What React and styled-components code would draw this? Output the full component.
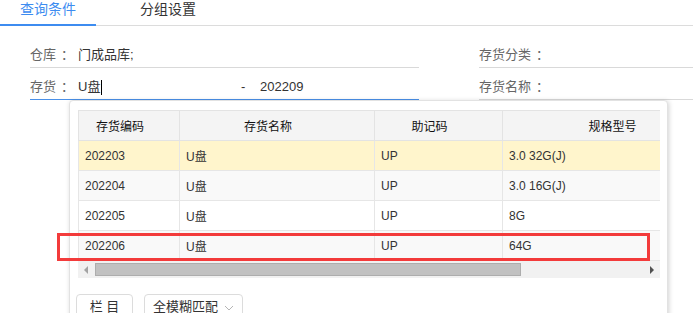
import React from 'react';
import styled, { createGlobalStyle } from 'styled-components';

const GlobalStyle = createGlobalStyle`
  html, body {
    margin: 0;
    padding: 0;
    background: #fff;
    overflow: hidden;
  }
  body {
    font-family: "Liberation Sans", "Noto Sans CJK SC", sans-serif;
    color: #333;
  }
`;

const Page = styled.div`
  position: relative;
  width: 693px;
  height: 313px;
  overflow: hidden;
`;

const TabBar = styled.div`
  display: flex;
  height: 25px;
  border-bottom: 1px solid #dcdcdc;
`;

const Tab = styled.div`
  box-sizing: border-box;
  width: 96px;
  height: 26px;
  margin-right: 24px;
  text-align: center;
  font-size: 14px;
  line-height: 19px;
  color: ${(p) => (p.$active ? '#3d8cf0' : '#333')};
  border-bottom: 2px solid ${(p) => (p.$active ? '#3d8cf0' : 'transparent')};
`;

const Form = styled.div`
  display: grid;
  grid-template-columns: 389px 1fr;
  column-gap: 60px;
  row-gap: 7px;
  padding: 17px 0 0 30px;
`;

const Field = styled.div`
  display: flex;
  align-items: center;
  height: 24px;
  font-size: 13px;
  line-height: 24px;
  border-bottom: 1px solid ${(p) => (p.$focused ? '#4a90e8' : '#d9d9d9')};
`;

const Label = styled.span`
  width: ${(p) => (p.$auto ? 'auto' : '48px')};
  flex: none;
  color: #666;
  white-space: nowrap;
`;

const Colon = styled.span`
  margin-left: 5px;
`;

const Value = styled.span`
  color: #333;
  white-space: nowrap;
  width: ${(p) => p.$width || 'auto'};
  display: inline-flex;
  align-items: center;
`;

const Caret = styled.span`
  display: inline-block;
  width: 1px;
  height: 15px;
  background: #000;
  margin-left: 1px;
`;

const Dash = styled.span`
  width: 19px;
  color: #333;
`;

const Panel = styled.div`
  position: absolute;
  left: 69px;
  top: 100px;
  box-sizing: border-box;
  width: 599px;
  height: 240px;
  padding: 9px 0 0 8px;
  background: #fff;
  border: 1px solid #e2e2e2;
  border-radius: 4px;
  box-shadow: 1px 1px 5px rgba(0, 0, 0, 0.18);
`;

const GridWrap = styled.div`
  width: 582px;
  overflow: hidden;
`;

const Table = styled.table`
  table-layout: fixed;
  border-collapse: collapse;
  width: 662px;
  font-size: 12px;
`;

const Th = styled.th`
  height: 29px;
  padding: 0 18px 0 0;
  background: #f4f4f4;
  border: 1px solid #e3e3e3;
  font-weight: normal;
  color: #111;
  text-align: center;
  white-space: nowrap;
`;

const Row = styled.tr`
  background: ${(p) => p.$bg};
`;

const Td = styled.td`
  height: 29px;
  padding: 0 6px;
  border: 1px solid #e6e6e6;
  color: #333;
  white-space: nowrap;
`;

const ScrollBar = styled.div`
  display: flex;
  align-items: center;
  height: 17px;
  background: #f1f1f1;
`;

const Arrow = styled.div`
  width: 17px;
  height: 17px;
  display: flex;
  align-items: center;
  justify-content: center;
  flex: none;
`;

const Thumb = styled.div`
  box-sizing: border-box;
  width: 426px;
  height: 13px;
  background: #c1c1c1;
  border: 1px solid #adadad;
`;

const Track = styled.div`
  flex: 1;
`;

const Footer = styled.div`
  display: flex;
  gap: 11px;
  margin: 16px 0 0 -2px;
`;

const Button = styled.div`
  box-sizing: border-box;
  display: flex;
  align-items: flex-start;
  justify-content: ${(p) => (p.$between ? 'space-between' : 'center')};
  width: ${(p) => p.$width};
  height: 28px;
  padding: 3px 8px 0;
  border: 1px solid #dcdcdc;
  border-radius: 4px;
  font-size: 13px;
  line-height: 18px;
  color: #333;
  white-space: nowrap;
`;

const Chevron = styled.svg`
  margin-top: 7px;
`;

const Highlight = styled.div`
  position: absolute;
  left: 57px;
  top: 233px;
  width: 593px;
  height: 28px;
  box-sizing: border-box;
  border: 3px solid #f33b3b;
  pointer-events: none;
`;

const columns = [
  { title: '存货编码', width: 101 },
  { title: '存货名称', width: 195 },
  { title: '助记码', width: 128 },
  { title: '规格型号', width: 238 },
];

const rows = [
  { code: '202203', name: 'U盘', mnem: 'UP', spec: '3.0 32G(J)', bg: '#fff5cc' },
  { code: '202204', name: 'U盘', mnem: 'UP', spec: '3.0 16G(J)', bg: '#f9f9f9' },
  { code: '202205', name: 'U盘', mnem: 'UP', spec: '8G', bg: '#ffffff' },
  { code: '202206', name: 'U盘', mnem: 'UP', spec: '64G', bg: '#f9f9f9' },
];

const App = () => {
  return (
    <Page>
      <GlobalStyle />
      <TabBar>
        <Tab $active>查询条件</Tab>
        <Tab>分组设置</Tab>
      </TabBar>

      <Form>
        <Field>
          <Label>仓库<Colon>：</Colon></Label>
          <Value>门成品库;</Value>
        </Field>
        <Field>
          <Label $auto>存货分类<Colon>：</Colon></Label>
        </Field>
        <Field $focused>
          <Label>存货<Colon>：</Colon></Label>
          <Value $width="163px">
            U盘
            <Caret />
          </Value>
          <Dash>-</Dash>
          <Value>202209</Value>
        </Field>
        <Field>
          <Label $auto>存货名称<Colon>：</Colon></Label>
        </Field>
      </Form>

      <Panel>
        <GridWrap>
          <Table>
            <colgroup>
              {columns.map((c) => (
                <col key={c.title} style={{ width: c.width }} />
              ))}
            </colgroup>
            <thead>
              <tr>
                {columns.map((c) => (
                  <Th key={c.title}>{c.title}</Th>
                ))}
              </tr>
            </thead>
            <tbody>
              {rows.map((r) => (
                <Row key={r.code} $bg={r.bg}>
                  <Td>{r.code}</Td>
                  <Td>{r.name}</Td>
                  <Td>{r.mnem}</Td>
                  <Td>{r.spec}</Td>
                </Row>
              ))}
            </tbody>
          </Table>
          <ScrollBar>
            <Arrow>
              <svg width="5" height="8" viewBox="0 0 5 8">
                <path d="M4 0 L0 4 L4 8 Z" fill="#a3a3a3" />
              </svg>
            </Arrow>
            <Thumb />
            <Track />
            <Arrow>
              <svg width="5" height="8" viewBox="0 0 5 8">
                <path d="M1 0 L5 4 L1 8 Z" fill="#505050" />
              </svg>
            </Arrow>
          </ScrollBar>
        </GridWrap>
        <Footer>
          <Button $width="57px">栏 目</Button>
          <Button $width="99px" $between>
            全模糊匹配
            <Chevron width="10" height="6" viewBox="0 0 10 6">
              <path d="M1 1 L5 5 L9 1" fill="none" stroke="#b5b5b5" strokeWidth="1" />
            </Chevron>
          </Button>
        </Footer>
      </Panel>

      <Highlight />
    </Page>
  );
};

export default App;
